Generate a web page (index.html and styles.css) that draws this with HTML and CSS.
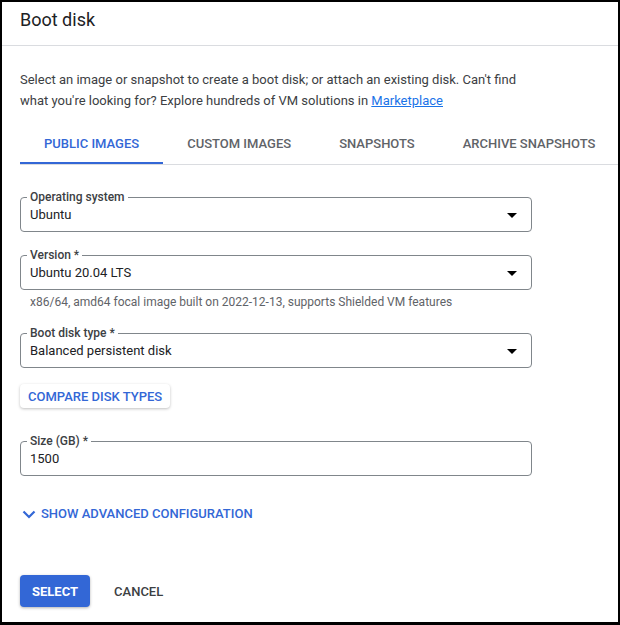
FILE: index.html
```html
<!DOCTYPE html>
<html lang="en">
<head>
  <meta charset="UTF-8" />
  <title>Boot disk</title>
  <link rel="stylesheet" href="styles.css">
</head>
<body>
  <div class="panel">
    <div class="panel-header">Boot disk</div>

    <div class="panel-body">
      <p class="intro">
        Select an image or snapshot to create a boot disk; or attach an existing disk. Can't find
        what you're looking for? Explore hundreds of VM solutions in <a href="#">Marketplace</a>
      </p>

      <div class="tabs">
        <div class="tab active">Public images</div>
        <div class="tab">Custom images</div>
        <div class="tab">Snapshots</div>
        <div class="tab">Archive snapshots</div>
      </div>

      <fieldset class="field first">
        <legend>Operating system</legend>
        <div class="value">Ubuntu <span class="caret"></span></div>
      </fieldset>

      <fieldset class="field">
        <legend>Version *</legend>
        <div class="value">Ubuntu 20.04 LTS <span class="caret"></span></div>
      </fieldset>
      <div class="hint">x86/64, amd64 focal image built on 2022-12-13, supports Shielded VM features</div>

      <fieldset class="field">
        <legend>Boot disk type *</legend>
        <div class="value">Balanced persistent disk <span class="caret"></span></div>
      </fieldset>

      <button class="btn-raised">Compare disk types</button>

      <fieldset class="field size">
        <legend>Size (GB) *</legend>
        <div class="value">1500</div>
      </fieldset>

      <div class="advanced">
        <svg width="14" height="10" viewBox="0 0 14 10">
          <path d="M1.5 2.5 L7 8 L12.5 2.5" fill="none" stroke="#3367d6" stroke-width="2.2" />
        </svg>
        Show advanced configuration
      </div>

      <div class="actions">
        <button class="btn-primary">Select</button>
        <button class="btn-text">Cancel</button>
      </div>
    </div>
  </div>
</body>
</html>
```

FILE: styles.css
```css
body, html {
  margin: 0;
  padding: 0;
  font-family: Roboto, 'Noto Sans', Arial, sans-serif;
  color: #202124;
  background: #fff;
}
.panel {
  box-sizing: border-box;
  width: 620px;
  height: 625px;
  border: 2px solid #000;
  border-bottom-width: 3px;
  overflow: hidden;
}
.panel-header {
  font-size: 18px;
  line-height: 24px;
  padding: 6px 18px 13px;
  border-bottom: 1px solid #dadce0;
}
.panel-body {
  padding: 0 0 0 18px;
}
.intro {
  max-width: 505px;
  margin: 0;
  padding: 23px 0 0;
  font-size: 13px;
  line-height: 21px;
  color: #3c4043;
}
.intro a {
  color: #1a73e8;
  text-decoration: underline;
}
.tabs {
  display: flex;
  margin-top: 14px;
  border-bottom: 1px solid #dadce0;
}
.tab {
  height: 37px;
  line-height: 38px;
  padding: 0 24px;
  font-size: 13px;
  font-weight: 500;
  text-transform: uppercase;
  color: #5f6368;
  border-bottom: 2px solid transparent;
  white-space: nowrap;
}
.tab.active {
  color: #3367d6;
  border-bottom-color: #3367d6;
}
.field {
  width: 512px;
  box-sizing: border-box;
  margin: 16px 0 0;
  padding: 1px 9px 6px;
  border: 1px solid #80868b;
  border-radius: 4px;
}
.field.first {
  margin-top: 25px;
}
.field legend {
  margin-left: -3px;
  padding: 0 3px;
  font-size: 12px;
  line-height: 14px;
  font-weight: 500;
  color: #3c4043;
}
.value {
  display: flex;
  align-items: center;
  justify-content: space-between;
  font-size: 13px;
  line-height: 20px;
  color: #202124;
}
.caret {
  width: 0;
  height: 0;
  margin-right: 5px;
  border-left: 5px solid transparent;
  border-right: 5px solid transparent;
  border-top: 5px solid #000;
}
.hint {
  margin-top: 4px;
  padding-left: 10px;
  font-size: 12px;
  line-height: 16px;
  color: #5f6368;
}
.btn-raised {
  display: block;
  margin-top: 16px;
  height: 24px;
  padding: 0 8px;
  border: none;
  border-radius: 4px;
  background: #fff;
  box-shadow: 0 1px 3px rgba(0,0,0,0.25);
  font-family: inherit;
  font-size: 13px;
  font-weight: 500;
  text-transform: uppercase;
  color: #3367d6;
}
.field.size {
  margin-top: 26px;
}
.advanced {
  display: flex;
  align-items: center;
  gap: 5px;
  margin-top: 30px;
  padding-left: 2px;
  font-size: 13px;
  font-weight: 500;
  line-height: 16px;
  text-transform: uppercase;
  color: #3367d6;
}
.actions {
  display: flex;
  align-items: center;
  gap: 8px;
  margin-top: 53px;
}
.btn-primary {
  height: 32px;
  padding: 0 12px;
  border: none;
  border-radius: 4px;
  background: #3367d6;
  box-shadow: 0 1px 3px rgba(0,0,0,0.3);
  font-family: inherit;
  font-size: 13px;
  font-weight: 700;
  text-transform: uppercase;
  color: #fff;
}
.btn-text {
  height: 32px;
  padding: 0 16px;
  border: none;
  background: none;
  font-family: inherit;
  font-size: 13px;
  font-weight: 500;
  text-transform: uppercase;
  color: #3c4043;
}
```
